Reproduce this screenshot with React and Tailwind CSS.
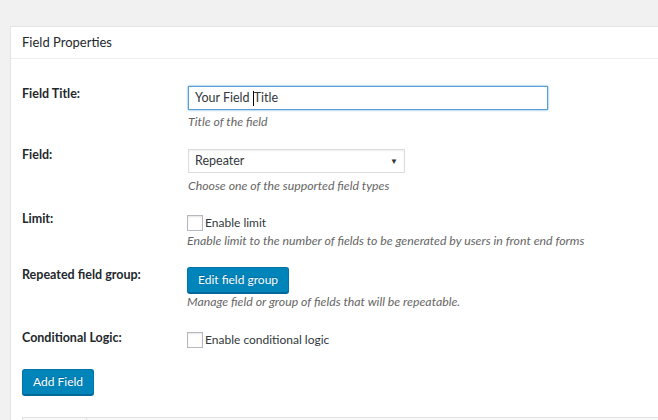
import React from 'react';

const font = { fontFamily: 'Lato, "Noto Sans", sans-serif' };

const Checkbox = () => (
  <span className="inline-block w-4 h-4 border border-[#b4b9be] bg-white shadow-[inset_0_1px_2px_rgba(0,0,0,0.1)] shrink-0"></span>
);

const Desc = ({ children, className = '' }) => (
  <p className={`text-[12.3px] leading-[18px] italic text-[#666] ${className}`}>{children}</p>
);

const Label = ({ children }) => (
  <div className="text-[12.5px] leading-[18px] font-bold text-[#23282d]">{children}</div>
);

const PrimaryButton = ({ children }) => (
  <button className="h-[26px] px-[10px] rounded-[3px] bg-[#0085ba] border border-[#0073aa] border-b-[#006799] shadow-[0_1px_0_#006799] text-white text-[12px] leading-[24px] [text-shadow:0_-1px_1px_#006799]">
    {children}
  </button>
);

export default function App() {
  return (
    <div className="w-[658px] h-[420px] overflow-hidden bg-[#f1f1f1] pt-[26px] text-[#23282d]" style={font}>
      {/* Postbox */}
      <div className="ml-[10px] mr-[-20px] bg-white border border-[#e5e5e5] shadow-[0_1px_1px_rgba(0,0,0,0.04)]">
        <div className="h-[32px] border-b border-[#eee] px-[11px] flex items-center">
          <h2 className="text-[13px] text-[#23282d]">Field Properties</h2>
        </div>

        <div className="px-[11px] pt-[26px]">
          {/* Field Title */}
          <div className="grid grid-cols-[166px_1fr]">
            <Label>Field Title:</Label>
            <div>
              <div className="mt-[1px] w-[360px] h-[24px] border border-[#5b9dd9] shadow-[0_0_2px_rgba(30,140,190,0.8)] px-[6px] flex items-center text-[12.5px] text-[#32373c]">
                Your Field&nbsp;<span className="inline-block w-px h-[15px] bg-black"></span>Title
              </div>
              <Desc className="mt-[3px]">Title of the field</Desc>
            </div>
          </div>

          {/* Field */}
          <div className="grid grid-cols-[166px_1fr] mt-[15px]">
            <Label>Field:</Label>
            <div>
              <div className="mt-[3px] w-[217px] h-[24px] border border-[#ddd] shadow-[inset_0_1px_2px_rgba(0,0,0,0.07)] pl-[6px] pr-[6px] flex items-center justify-between text-[12.5px] text-[#32373c]">
                <span>Repeater</span>
                <span className="text-[8px] text-[#333]">▼</span>
              </div>
              <Desc className="mt-[4px]">Choose one of the supported field types</Desc>
            </div>
          </div>

          {/* Limit */}
          <div className="grid grid-cols-[166px_1fr] mt-[15px]">
            <Label>Limit:</Label>
            <div className="-ml-px">
              <label className="mt-[3px] h-[19px] flex items-center gap-[2px] text-[12px] text-[#32373c]">
                <Checkbox />
                <span>Enable limit</span>
              </label>
              <Desc>Enable limit to the number of fields to be generated by users in front end forms</Desc>
            </div>
          </div>

          {/* Repeated field group */}
          <div className="grid grid-cols-[166px_1fr] mt-[16px]">
            <Label>Repeated field group:</Label>
            <div className="-ml-px">
              <div className="mt-[1px] flex">
                <PrimaryButton>Edit field group</PrimaryButton>
              </div>
              <Desc>Manage field or group of fields that will be repeatable.</Desc>
            </div>
          </div>

          {/* Conditional Logic */}
          <div className="grid grid-cols-[166px_1fr] mt-[18px]">
            <Label>Conditional Logic:</Label>
            <div className="-ml-px">
              <label className="mt-[1px] h-[20px] flex items-center gap-[2px] text-[12px] text-[#32373c]">
                <Checkbox />
                <span>Enable conditional logic</span>
              </label>
            </div>
          </div>

          <div className="mt-[19px] flex">
            <PrimaryButton>Add Field</PrimaryButton>
          </div>

          {/* Fields table */}
          <div className="mt-[22px] border border-[#e1e1e1] bg-[#f9f9f9] grid grid-cols-[64px_1fr] h-[40px]">
            <div className="border-r border-[#e1e1e1]"></div>
            <div></div>
          </div>
        </div>
      </div>
    </div>
  );
}
